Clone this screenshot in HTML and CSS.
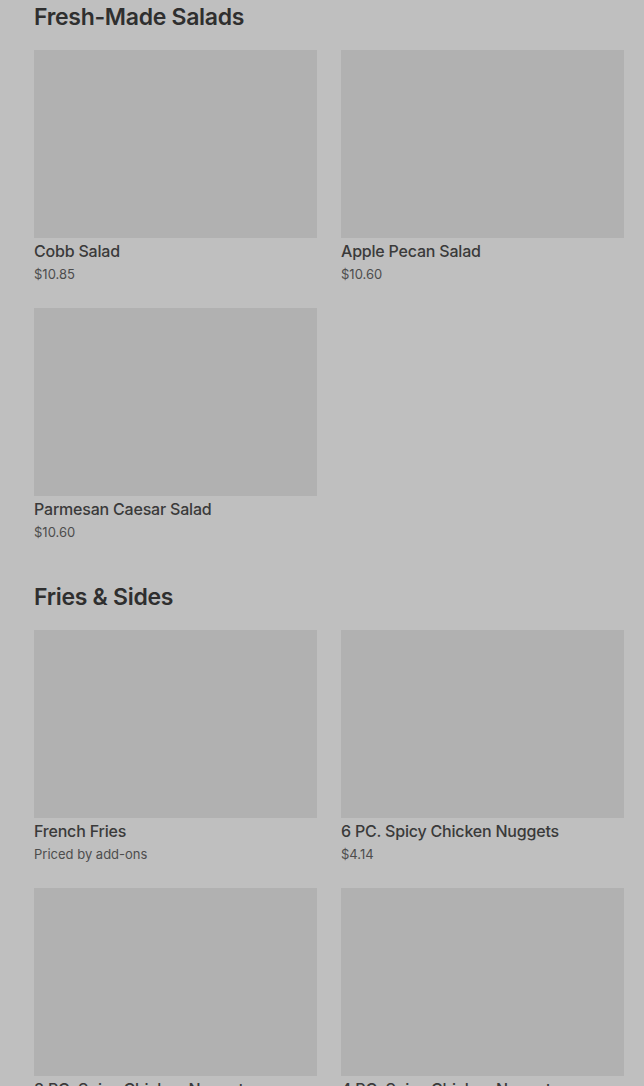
FILE: index.html
```html
<!DOCTYPE html>
<html lang="en">
<head>
<meta charset="utf-8">
<title>Menu</title>
<link rel="stylesheet" href="styles.css">
</head>
<body>
<main class="menu">
  <section class="section">
    <h2 class="section-title">Fresh-Made Salads</h2>
    <div class="grid">
      <article class="item">
        <div class="item-img"></div>
        <div class="item-name">Cobb Salad</div>
        <div class="item-price">$10.85</div>
      </article>
      <article class="item">
        <div class="item-img"></div>
        <div class="item-name">Apple Pecan Salad</div>
        <div class="item-price">$10.60</div>
      </article>
      <article class="item">
        <div class="item-img"></div>
        <div class="item-name">Parmesan Caesar Salad</div>
        <div class="item-price">$10.60</div>
      </article>
    </div>
  </section>
  <section class="section">
    <h2 class="section-title">Fries &amp; Sides</h2>
    <div class="grid">
      <article class="item">
        <div class="item-img"></div>
        <div class="item-name">French Fries</div>
        <div class="item-price">Priced by add-ons</div>
      </article>
      <article class="item">
        <div class="item-img"></div>
        <div class="item-name">6 PC. Spicy Chicken Nuggets</div>
        <div class="item-price">$4.14</div>
      </article>
      <article class="item">
        <div class="item-img"></div>
        <div class="item-name">8 PC. Spicy Chicken Nuggets</div>
        <div class="item-price">$5.49</div>
      </article>
      <article class="item">
        <div class="item-img"></div>
        <div class="item-name">4 PC. Spicy Chicken Nuggets</div>
        <div class="item-price">$2.99</div>
      </article>
    </div>
  </section>
</main>
</body>
</html>
```
FILE: styles.css
```css
html, body {
  margin: 0;
  padding: 0;
  background: #bfbfbf;
}
body {
  font-family: Inter, "Noto Sans", "Liberation Sans", sans-serif;
  color: #3a3a3a;
}
.menu {
  padding: 3px 20px 0 34px;
}
.section {
  margin-bottom: 41px;
}
.section-title {
  margin: 0 0 19px;
  font-size: 23px;
  line-height: 28px;
  font-weight: 600;
  letter-spacing: -0.3px;
  color: #2f2f2f;
}
.grid {
  display: grid;
  grid-template-columns: 1fr 1fr;
  column-gap: 24px;
  row-gap: 24px;
}
.item {
  display: flex;
  flex-direction: column;
}
.item-img {
  height: 188px;
  background: #b1b1b1;
  margin-bottom: 2px;
}
.item-name {
  font-size: 16px;
  line-height: 22px;
  font-weight: 500;
  letter-spacing: -0.2px;
  color: #3a3a3a;
}
.item-price {
  margin-top: 2px;
  font-size: 13px;
  line-height: 20px;
  color: #4d4d4d;
}
```
